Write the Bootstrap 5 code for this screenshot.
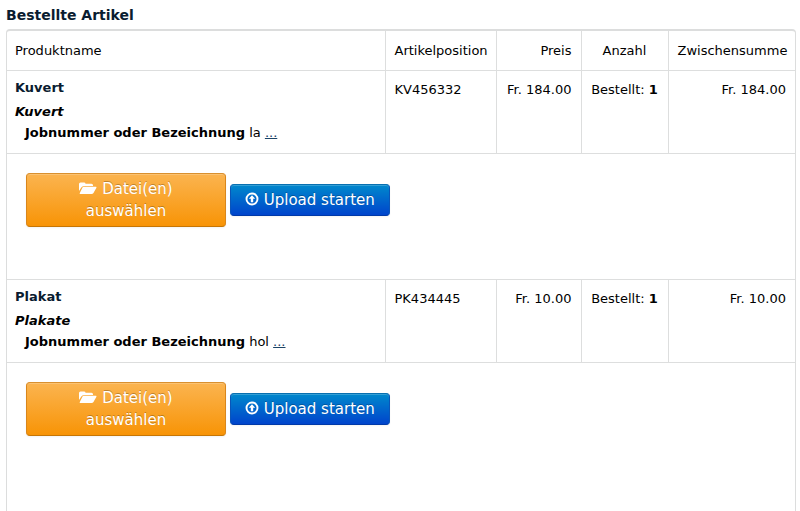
<!DOCTYPE html>
<html lang="de">
<head>
<meta charset="utf-8">
<meta name="viewport" content="width=device-width, initial-scale=1">
<title>Bestellte Artikel</title>
<link href="https://cdn.jsdelivr.net/npm/bootstrap@5.3.0/dist/css/bootstrap.min.css" rel="stylesheet">
<style>
body { font-family: Verdana, "DejaVu Sans", sans-serif; font-size: 13px; line-height: 20px; color: #000; background: #fff; }
.orders-page { padding: 5px 4px 0 6px; }
.orders-title { font-size: 14px; line-height: 20px; font-weight: 700; color: #0a1c30; margin: 0 0 4px; }
.orders-frame { border: 1px solid #dcdddd; border-top-width: 2px; border-radius: 4px; }
.orders-table { table-layout: fixed; color: #000; }
.orders-table th, .orders-table td { padding: 9px 9px 10px; border: 0 solid #dddede; font-weight: 400; white-space: nowrap; }
.orders-table th { padding-top: 10px; padding-bottom: 9px; }
.orders-table th:first-child { padding-left: 8px; }
.orders-table th + th, .orders-table td + td { border-left-width: 1px; }
.orders-table tbody td { border-top-width: 1px; }
.orders-table td.product-cell { padding: 7px 8px 8px; }
.col-position { width: 111px; }
.col-price { width: 85px; }
.col-count { width: 87px; }
.col-total { width: 127px; }
.product-name { font-size: 13px; line-height: 20px; color: #0a1c30; font-weight: 700; margin: 0 0 4px; }
.product-kind { line-height: 20px; font-weight: 700; font-style: italic; }
.product-options { padding-left: 10px; line-height: 22px; padding-bottom: 1px; }
.more-link { color: #1c4467; }
.orders-table td.upload-cell { padding: 19px 19px 52px; }
.orders-table tbody:last-child td.upload-cell { padding-bottom: 80px; }
.upload-btn { font-size: 15px; line-height: 22px; color: #fff; border-radius: 4px; padding: 4px 14px; }
.upload-btn:hover { color: #fff; }
.btn-choose { width: 200px; white-space: normal; background: linear-gradient(#fbb450, #f89406); border-color: #d9902f #d9861c #c67605; box-shadow: inset 0 1px 0 rgba(255,255,255,.2), 0 1px 2px rgba(0,0,0,.05); text-shadow: 0 -1px 0 rgba(0,0,0,.25); }
.btn-start { background: linear-gradient(#0088cc, #0044cc); border-color: #0870b0 #0a55b8 #0039a8; box-shadow: inset 0 1px 0 rgba(255,255,255,.2), 0 1px 2px rgba(0,0,0,.05); text-shadow: 0 -1px 0 rgba(0,0,0,.25); }
.btn-choose, .btn-choose:hover { padding: 4px 40px; }
.glyph { fill: currentColor; vertical-align: -1px; }
</style>
</head>
<body>
<main class="orders-page">
  <h1 class="orders-title">Bestellte Artikel</h1>
  <div class="orders-frame">
    <table class="table orders-table mb-0">
      <colgroup><col><col class="col-position"><col class="col-price"><col class="col-count"><col class="col-total"></colgroup>
      <thead>
        <tr><th scope="col">Produktname</th><th scope="col">Artikelposition</th><th scope="col" class="text-end">Preis</th><th scope="col" class="text-center">Anzahl</th><th scope="col" class="text-end">Zwischensumme</th></tr>
      </thead>
      <tbody>
        <tr>
          <td class="product-cell">
            <h2 class="product-name">Kuvert</h2>
            <div class="product-kind">Kuvert</div>
            <div class="product-options"><strong>Jobnummer oder Bezeichnung</strong> la <a href="#" class="more-link">...</a></div>
          </td>
          <td>KV456332</td><td class="text-end">Fr. 184.00</td><td class="text-center">Bestellt: <strong>1</strong></td><td class="text-end">Fr. 184.00</td>
        </tr>
        <tr>
          <td colspan="5" class="upload-cell">
            <div class="d-flex align-items-center gap-1">
              <button type="button" class="btn upload-btn btn-choose"><svg class="glyph" width="18" height="13" viewBox="0 0 18 13" aria-hidden="true"><path d="M0 9V2Q0 .5 1.500 .5H5Q6.500 .5 6.500 1.800H12.500Q14 1.800 14 3.300V4H5Q3.200 4 2.300 5.500ZM4.800 4.700H16.800Q18 4.700 17.300 5.900L14.300 11.200Q13.700 12 12.700 12H1.200Q.2 12 .8 11L3.500 5.600Q4 4.700 4.800 4.700Z"/></svg> Datei(en) auswählen</button>
              <button type="button" class="btn upload-btn btn-start"><svg class="glyph" width="14" height="14" viewBox="0 0 14 14" aria-hidden="true"><circle cx="7" cy="7" r="5.500" fill="none" stroke="currentColor" stroke-width="1.900"/><path d="M7 3.200 10.200 6.800H8.200V10.300H5.800V6.800H3.800Z"/></svg> Upload starten</button>
            </div>
          </td>
        </tr>
      </tbody>
      <tbody>
        <tr>
          <td class="product-cell">
            <h2 class="product-name">Plakat</h2>
            <div class="product-kind">Plakate</div>
            <div class="product-options"><strong>Jobnummer oder Bezeichnung</strong> hol <a href="#" class="more-link">...</a></div>
          </td>
          <td>PK434445</td><td class="text-end">Fr. 10.00</td><td class="text-center">Bestellt: <strong>1</strong></td><td class="text-end">Fr. 10.00</td>
        </tr>
        <tr>
          <td colspan="5" class="upload-cell">
            <div class="d-flex align-items-center gap-1">
              <button type="button" class="btn upload-btn btn-choose"><svg class="glyph" width="18" height="13" viewBox="0 0 18 13" aria-hidden="true"><path d="M0 9V2Q0 .5 1.500 .5H5Q6.500 .5 6.500 1.800H12.500Q14 1.800 14 3.300V4H5Q3.200 4 2.300 5.500ZM4.800 4.700H16.800Q18 4.700 17.300 5.900L14.300 11.200Q13.700 12 12.700 12H1.200Q.2 12 .8 11L3.500 5.600Q4 4.700 4.800 4.700Z"/></svg> Datei(en) auswählen</button>
              <button type="button" class="btn upload-btn btn-start"><svg class="glyph" width="14" height="14" viewBox="0 0 14 14" aria-hidden="true"><circle cx="7" cy="7" r="5.500" fill="none" stroke="currentColor" stroke-width="1.900"/><path d="M7 3.200 10.200 6.800H8.200V10.300H5.800V6.800H3.800Z"/></svg> Upload starten</button>
            </div>
          </td>
        </tr>
      </tbody>
    </table>
  </div>
</main>
<script src="https://cdn.jsdelivr.net/npm/bootstrap@5.3.0/dist/js/bootstrap.bundle.min.js"></script>
</body>
</html>
